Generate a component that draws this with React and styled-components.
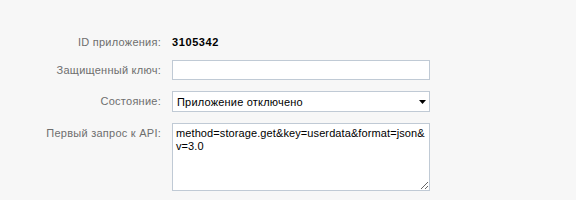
import styled, { createGlobalStyle } from "styled-components";

const GlobalStyle = createGlobalStyle`
  html, body {
    margin: 0;
    padding: 0;
    background: #f7f7f7;
  }
  body {
    font-family: Tahoma, "Liberation Sans", Arial, sans-serif;
    font-size: 11px;
  }
`;

const Form = styled.div`
  display: grid;
  grid-template-columns: 161px 258px;
  column-gap: 11px;
  row-gap: 11px;
  padding-top: 35px;
  width: 576px;
  height: 200px;
  box-sizing: border-box;
  align-content: start;
`;

const Label = styled.div`
  color: #6e6e6e;
  text-align: right;
  font-size: 11px;
  line-height: 13px;
  letter-spacing: 0.25px;
  padding-top: ${(p) => p.$top || 4}px;
`;

const Value = styled.div`
  color: #000;
  font-weight: bold;
  font-size: 11px;
  line-height: 13px;
  letter-spacing: 0.6px;
  padding-top: 1px;
  margin-bottom: -3px;
`;

const TextInput = styled.input`
  box-sizing: border-box;
  width: 258px;
  height: 20px;
  margin: 0;
  border: 1px solid #c0cad5;
  background: #fff;
  padding: 2px 3px;
  font-family: inherit;
  font-size: 11px;
  outline: none;
`;

const SelectWrap = styled.div`
  position: relative;
  width: 258px;
  height: 21px;
`;

const Select = styled.select`
  appearance: none;
  -webkit-appearance: none;
  box-sizing: border-box;
  width: 100%;
  height: 100%;
  margin: 0;
  border: 1px solid #c0cad5;
  border-radius: 0;
  background: #fff;
  color: #000;
  padding: 0 20px 0 4px;
  font-family: inherit;
  font-size: 11px;
  letter-spacing: 0.2px;
  outline: none;
`;

const Arrow = styled.svg`
  position: absolute;
  right: 4px;
  top: 9px;
  pointer-events: none;
`;

const TextArea = styled.textarea`
  box-sizing: border-box;
  width: 258px;
  height: 68px;
  margin: 0;
  border: 1px solid #c0cad5;
  background: #fff;
  color: #000;
  padding: 3px;
  font-family: inherit;
  font-size: 11px;
  line-height: 13px;
  letter-spacing: 0.1px;
  outline: none;
  resize: both;
`;

const App = () => {
  return (
    <>
      <GlobalStyle />
      <Form>
        <Label $top={1}>ID приложения:</Label>
        <Value>3105342</Value>

        <Label>Защищенный ключ:</Label>
        <TextInput type="text" defaultValue="" />

        <Label>Состояние:</Label>
        <SelectWrap>
          <Select defaultValue="off">
            <option value="off">Приложение отключено</option>
            <option value="on">Приложение включено</option>
          </Select>
          <Arrow width="7" height="4" viewBox="0 0 7 4">
            <path d="M0 0h7L3.5 4z" fill="#000" />
          </Arrow>
        </SelectWrap>

        <Label>Первый запрос к API:</Label>
        <TextArea defaultValue="method=storage.get&key=userdata&format=json&v=3.0" />
      </Form>
    </>
  );
};

export default App;
